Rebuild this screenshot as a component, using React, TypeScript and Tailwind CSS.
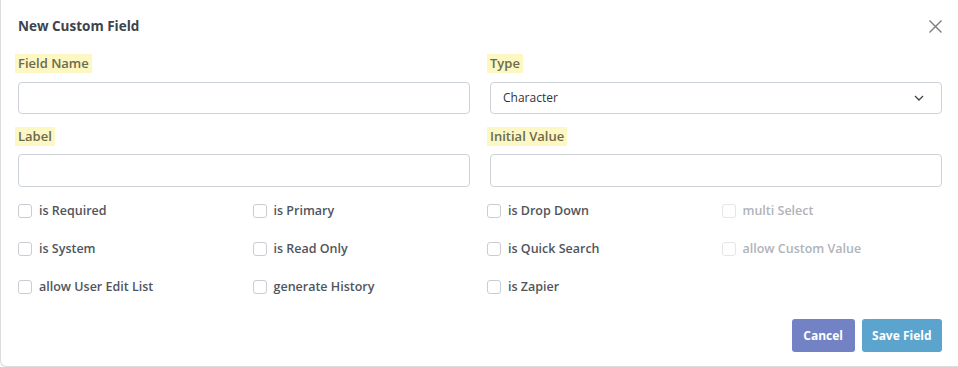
import React from "react";

const font = { fontFamily: '"Open Sans", "Noto Sans", Arial, sans-serif' };

function FieldLabel({ children }: { children: React.ReactNode }) {
  return (
    <div className="flex h-[19px]">
      <span className="-ml-[3px] flex items-center bg-[#fdf7c3] px-[3px] text-[13px] font-semibold leading-none text-[#6b6b4c]">
        {children}
      </span>
    </div>
  );
}

function Check({ label, disabled }: { label: string; disabled?: boolean }) {
  return (
    <label className="flex h-[20px] items-center gap-[7px]">
      <span
        className={
          disabled
            ? "h-[14px] w-[14px] rounded-[3px] border border-[#e3e5e8] bg-white"
            : "h-[14px] w-[14px] rounded-[3px] border border-[#c9cdd3] bg-white"
        }
      />
      <span className={disabled ? "text-[12.5px] font-semibold text-[#b0b3b8]" : "text-[12.5px] font-semibold text-[#50555d]"}>
        {label}
      </span>
    </label>
  );
}

export default function App() {
  return (
    <div style={font} className="h-[367px] w-[958px] rounded-bl-md border-b border-l border-[#dcdcdc] bg-white">
      <div className="flex items-center justify-between pl-[17px] pr-[15px] pt-[16px]">
        <h2 className="text-[13.5px] font-bold leading-[20px] text-[#3d434c]">New Custom Field</h2>
        <svg width="16" height="16" viewBox="0 0 16 16" className="text-[#7b7b7b]">
          <path d="M2.5 2.5L14.5 14.5M14.5 2.5L2.5 14.5" stroke="currentColor" strokeWidth="1.4" />
        </svg>
      </div>

      <div className="pl-[17px] pr-[16px]">
        <div className="mt-[18px] grid grid-cols-2 gap-x-[20px]">
          <div>
            <FieldLabel>Field Name</FieldLabel>
            <input className="mt-[9px] h-[32px] w-full rounded-[4px] border border-[#cdd2d9] outline-none" />
          </div>
          <div>
            <FieldLabel>Type</FieldLabel>
            <div className="mt-[9px] flex h-[32px] w-full items-center justify-between rounded-[4px] border border-[#cdd2d9] pl-[12px] pr-[17px]">
              <span className="text-[12px] text-[#333]">Character</span>
              <svg width="10" height="6" viewBox="0 0 10 6">
                <path d="M1 1l4 4 4-4" fill="none" stroke="#444" strokeWidth="1.3" />
              </svg>
            </div>
          </div>
        </div>

        <div className="mt-[13px] grid grid-cols-2 gap-x-[20px]">
          <div>
            <FieldLabel>Label</FieldLabel>
            <input className="mt-[8px] h-[33px] w-full rounded-[4px] border border-[#cdd2d9] outline-none" />
          </div>
          <div>
            <FieldLabel>Initial Value</FieldLabel>
            <input className="mt-[8px] h-[33px] w-full rounded-[4px] border border-[#cdd2d9] outline-none" />
          </div>
        </div>

        <div className="mt-[14px] grid grid-cols-4 gap-x-[14px] gap-y-[18px]">
          <Check label="is Required" />
          <Check label="is Primary" />
          <Check label="is Drop Down" />
          <Check label="multi Select" disabled />
          <Check label="is System" />
          <Check label="is Read Only" />
          <Check label="is Quick Search" />
          <Check label="allow Custom Value" disabled />
          <Check label="allow User Edit List" />
          <Check label="generate History" />
          <Check label="is Zapier" />
        </div>

        <div className="mt-[22px] flex justify-end gap-[7px]">
          <button className="h-[33px] rounded-[3px] bg-[#7382c5] px-[11.5px] text-[12px] font-bold text-white">Cancel</button>
          <button className="h-[33px] rounded-[3px] bg-[#5ba4cd] px-[10.5px] text-[12px] font-bold text-white">Save Field</button>
        </div>
      </div>
    </div>
  );
}
